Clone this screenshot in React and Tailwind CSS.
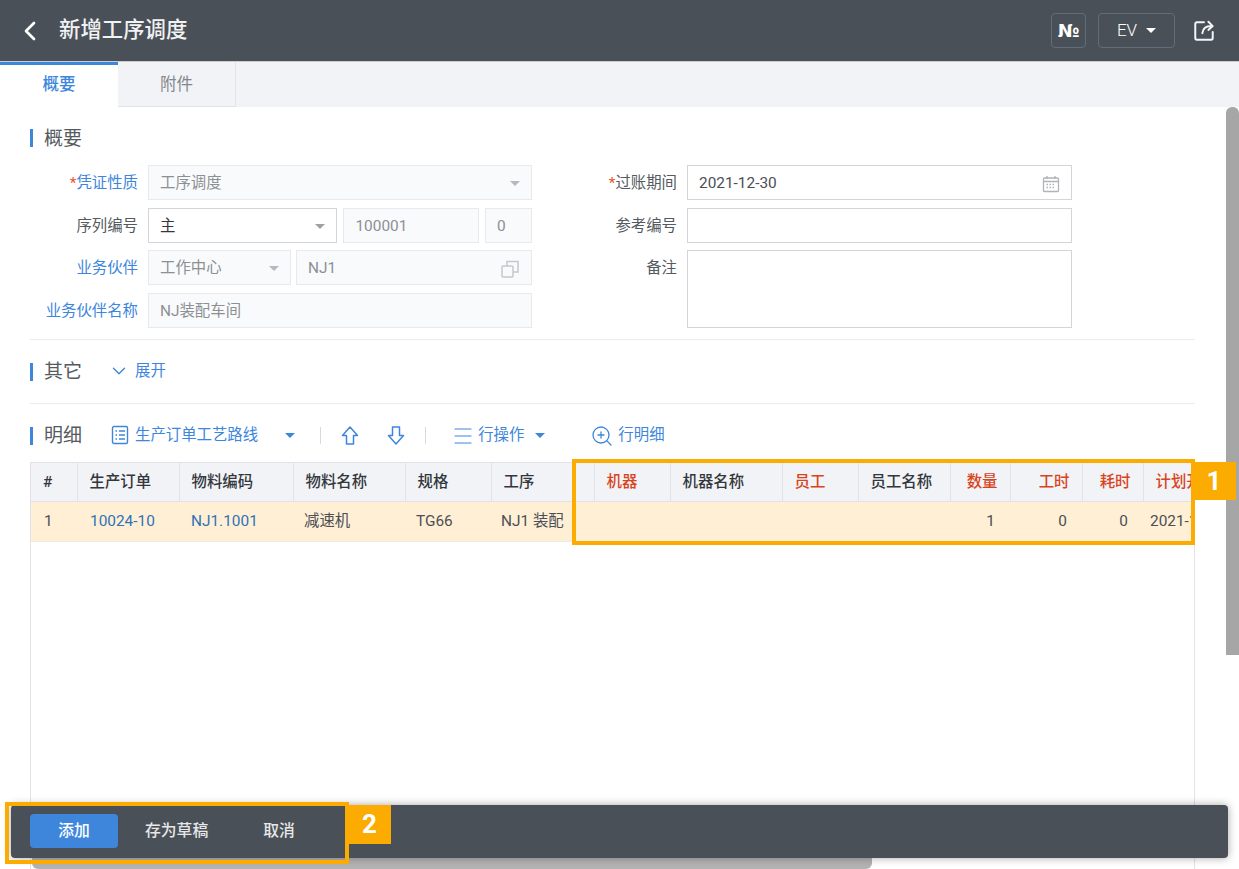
import { ChevronLeft, ChevronDown, Menu, ZoomIn } from 'lucide-react'

const font = '[font-family:Roboto,"Noto_Sans_CJK_SC",sans-serif]'

const columns = [
  { title: '#', value: '1', width: 'w-[46px]', pad: 'pl-[13px]' },
  { title: '生产订单', value: '10024-10', width: 'w-[102px]', pad: 'pl-[13px]', link: true },
  { title: '物料编码', value: 'NJ1.1001', width: 'w-[114px]', pad: 'pl-[12px]', link: true },
  { title: '物料名称', value: '减速机', width: 'w-[112px]', pad: 'pl-[11px]' },
  { title: '规格', value: 'TG66', width: 'w-[86px]', pad: 'pl-[11px]' },
  { title: '工序', value: 'NJ1 装配', width: 'w-[103px]', pad: 'pl-[10px]' },
  { title: '机器', value: '', width: 'w-[76px]', red: true },
  { title: '机器名称', value: '', width: 'w-[112px]' },
  { title: '员工', value: '', width: 'w-[76px]', red: true },
  { title: '员工名称', value: '', width: 'w-[92px]' },
  { title: '数量', value: '1', width: 'w-[60px]', red: true, right: true },
  { title: '工时', value: '0', width: 'w-[72px]', red: true, right: true },
  { title: '耗时', value: '0', width: 'w-[61px]', red: true, right: true },
  { title: '计划开始日期', value: '2021-12-30', width: 'w-[120px]', pad: 'pl-[7px]', red: true },
]

function Caret({ className = 'border-t-[#b5b8bd]' }) {
  return <span className={`block w-0 h-0 border-x-[5px] border-x-transparent border-t-[5px] ${className}`} />
}

function SectionTitle({ children }) {
  return (
    <div className="flex items-center h-[18px] border-l-[3px] border-[#3d86dc] pl-[11px] text-[19px] text-[#555a60] whitespace-nowrap">
      <span className="pt-[2px]">{children}</span>
    </div>
  )
}

function Label({ children, tone = 'text-[#555a60]', required }) {
  return (
    <div className={`w-[108px] shrink-0 pt-[7px] text-right text-[15.4px] whitespace-nowrap ${tone}`}>
      {required && <span className="text-[#f0532b]">*</span>}
      {children}
    </div>
  )
}

function Field({ children, disabled, className = '' }) {
  return (
    <div
      className={`h-[35px] flex items-center justify-between px-[11px] pt-[2px] border text-[15.4px] ${
        disabled ? 'bg-[#f9fafb] border-[#e8e9eb] text-[#8c9095]' : 'bg-white border-[#d3d5d8] text-[#4c5056]'
      } ${className}`}
    >
      {children}
    </div>
  )
}

function FormRow({ label, tone, required, children, className = '' }) {
  return (
    <div className={`flex gap-[10px] ${className}`}>
      <Label tone={tone} required={required}>{label}</Label>
      {children}
    </div>
  )
}

function DetailIcon() {
  return (
    <svg width="18" height="20" viewBox="0 0 18 20" fill="none" stroke="#3d86dc" strokeWidth="1.4">
      <rect x="1.5" y="1.5" width="15" height="17" rx="1.5" />
      <path d="M4.5 6h1.5M8 6h6M4.5 10h1.5M8 10h6M4.5 14h1.5M8 14h6" />
    </svg>
  )
}

function OutlineArrow({ down }) {
  return (
    <svg width="20" height="21" viewBox="0 0 20 21" fill="none" stroke="#3d86dc" strokeWidth="1.5" strokeLinejoin="round" className={down ? 'rotate-180' : ''}>
      <path d="M10 2 2.5 10.5H6.5V19H13.5V10.5H17.5Z" />
    </svg>
  )
}

export default function App() {
  return (
    <div className={`relative h-[869px] w-[1239px] overflow-hidden bg-white flex flex-col ${font}`}>
      {/* top bar */}
      <header className="h-[62px] shrink-0 bg-[#4a5057] border-b border-[#c9ccd0] flex items-center text-white">
        <ChevronLeft size={32} strokeWidth={2} className="ml-[14px]" />
        <h1 className="ml-[13px] text-[21.4px] font-medium text-[#f1f2f3]">新增工序调度</h1>
        <div className="ml-auto flex items-center">
          <div className="w-[35px] h-[35px] flex items-center justify-center border border-[#5f6d7c] rounded text-lg font-bold [font-family:'DejaVu_Sans',sans-serif]">№</div>
          <div className="ml-[12px] w-[77px] h-[35px] flex items-center justify-center gap-[9px] border border-[#5f6d7c] rounded text-[17px] font-light">
            EV
            <Caret className="border-t-white" />
          </div>
          <svg className="ml-[17px] mr-[23px]" width="24" height="24" viewBox="0 0 22 22" fill="none" stroke="#f4f5f6" strokeWidth="1.8" strokeLinecap="round" strokeLinejoin="round">
            <path d="M11 3H4.5A1.5 1.5 0 0 0 3 4.5v13A1.5 1.5 0 0 0 4.5 19h13a1.5 1.5 0 0 0 1.5-1.5V12" />
            <path d="M9.5 13c.5-4 3-6.5 8-6.5M15 2.5l4 4-4 3.5" />
          </svg>
        </div>
      </header>

      {/* tabs */}
      <nav className="h-[45px] shrink-0 bg-[#f1f3f7] flex text-[16.5px]">
        <div className="w-[118px] bg-white border-t-[3px] border-[#3d86dc] pb-[1px] flex items-center justify-center font-medium text-[#3d86dc]">概要</div>
        <div className="w-[118px] border-r border-b border-[#e1e3e8] pt-[3px] flex items-center justify-center text-[#83888e]">附件</div>
      </nav>

      <main className="flex-1 min-h-0 pl-[30px] pr-[44px] flex flex-col">
        <div className="mt-[22px]">
          <SectionTitle>概要</SectionTitle>
        </div>

        {/* form */}
        <div className="mt-[18px] flex">
          <div className="w-[502px] flex flex-col">
            <FormRow label="凭证性质" tone="text-[#3d86dc]" required>
              <Field disabled className="w-[384px]">工序调度<Caret /></Field>
            </FormRow>
            <FormRow label="序列编号" className="mt-[8px]">
              <div className="w-[384px] flex gap-[6px]">
                <Field className="w-[190px] text-[#33373c]">主<Caret className="border-t-[#9da1a6]" /></Field>
                <Field disabled className="w-[136px]">100001</Field>
                <Field disabled className="w-[47px]">0</Field>
              </div>
            </FormRow>
            <FormRow label="业务伙伴" tone="text-[#3d86dc]" className="mt-[7px]">
              <div className="w-[384px] flex gap-[5px]">
                <Field disabled className="w-[143px]">工作中心<Caret /></Field>
                <Field disabled className="w-[236px]">
                  NJ1
                  <svg width="20" height="20" viewBox="0 0 20 20" fill="none" stroke="#c6c8cb" strokeWidth="1.5">
                    <rect x="2" y="7" width="11" height="11" rx="1" />
                    <path d="M7 7V2.5h11V13h-5" />
                  </svg>
                </Field>
              </div>
            </FormRow>
            <FormRow label="业务伙伴名称" tone="text-[#3d86dc]" className="mt-[8px]">
              <Field disabled className="w-[384px]">NJ装配车间</Field>
            </FormRow>
          </div>

          <div className="ml-[37px] flex flex-col">
            <FormRow label="过账期间" required>
              <Field className="w-[385px]">
                2021-12-30
                <svg width="18" height="18" viewBox="0 0 18 18" fill="none" stroke="#b0b3b7" strokeWidth="1.3">
                  <rect x="1.5" y="3" width="15" height="13.5" rx="1" />
                  <path d="M1.5 6.5h15M5 1v3M13 1v3" />
                  <path d="M4.5 9.5h9M4.5 12.5h9" strokeDasharray="1.5 1.5" />
                </svg>
              </Field>
            </FormRow>
            <FormRow label="参考编号" className="mt-[8px]">
              <Field className="w-[385px]" />
            </FormRow>
            <FormRow label="备注" className="mt-[7px]">
              <div className="w-[385px] h-[78px] border border-[#d3d5d8]" />
            </FormRow>
          </div>
        </div>

        <div className="mt-[11px] border-t border-[#ebecee]" />
        <div className="h-[64px] flex items-center border-b border-[#ebecee]">
          <SectionTitle>其它</SectionTitle>
          <div className="ml-[26px] flex items-center gap-[5px] text-[15.4px] text-[#3d86dc]">
            <ChevronDown size={22} strokeWidth={1.5} />
            展开
          </div>
        </div>

        {/* toolbar */}
        <div className="h-[58px] shrink-0 pt-[5px] flex items-center text-[15.4px] text-[#3d86dc] whitespace-nowrap">
          <SectionTitle>明细</SectionTitle>
          <div className="ml-[29px] flex items-center gap-[6px]">
            <DetailIcon />
            生产订单工艺路线
          </div>
          <div className="ml-[27px]"><Caret className="border-t-[#3d86dc]" /></div>
          <div className="ml-[25px] h-[17px] border-l border-[#d8dadd]" />
          <div className="ml-[19px]"><OutlineArrow /></div>
          <div className="ml-[26px]"><OutlineArrow down /></div>
          <div className="ml-[19px] h-[17px] border-l border-[#d8dadd]" />
          <div className="ml-[25px] flex items-center gap-[3px]">
            <Menu size={24} strokeWidth={1.2} />
            行操作
            <span className="ml-[8px]"><Caret className="border-t-[#3d86dc]" /></span>
          </div>
          <div className="ml-[45px] flex items-center gap-[4px]">
            <ZoomIn size={24} strokeWidth={1.3} />
            行明细
          </div>
        </div>

        {/* detail table */}
        <div className="flex-1 min-h-0 overflow-hidden border-x border-[#e1e3e8]">
          <table className="table-fixed w-[1232px] border-collapse text-[15.4px]">
            <thead>
              <tr className="h-[39px] bg-[#f1f3f7] border-y border-[#e1e3e8]">
                {columns.map(col => (
                  <th
                    key={col.title}
                    className={`${col.width} pl-[12px] pr-[12px] pt-[1px] font-medium whitespace-nowrap overflow-hidden border-r border-[#e1e3e8] ${
                      col.right ? 'text-right' : 'text-left'
                    } ${col.red ? 'text-[#d9441c]' : 'text-[#33373c]'}`}
                  >
                    {col.title}
                  </th>
                ))}
              </tr>
            </thead>
            <tbody>
              <tr className="h-[40px] bg-[#ffefd5] border-y border-[#ecebe6]">
                {columns.map(col => (
                  <td
                    key={col.title}
                    className={`whitespace-nowrap overflow-hidden pt-[1px] ${col.pad || ''} ${col.right ? 'pr-[15px] text-right' : 'text-left'} ${
                      col.link ? 'text-[#2f73b8]' : 'text-[#4c5056]'
                    }`}
                  >
                    {col.value}
                  </td>
                ))}
              </tr>
            </tbody>
          </table>
        </div>
      </main>

      {/* scrollbars */}
      <div className="absolute right-0 top-[107px] w-[13px] h-[548px] rounded-t-md bg-[#a6a6a6]" />
      <div className="absolute left-[32px] top-[857px] w-[840px] h-[12px] rounded-b-md bg-[#b3b3b3]" />

      {/* action bar */}
      <div className="absolute left-[11px] top-[805px] w-[1217px] h-[53px] rounded bg-[#4a5057] shadow-[0_0_8px_rgba(0,0,0,0.35)] flex items-center text-[15.8px] font-medium text-[#e6e7e8] pb-[1px]">
        <button className="ml-[19px] w-[88px] h-[34px] rounded bg-[#3d86dc] text-white">添加</button>
        <button className="ml-[27px]">存为草稿</button>
        <button className="ml-[55px]">取消</button>
      </div>

      {/* callouts */}
      <div className="absolute left-[572px] top-[459px] w-[623px] h-[86px] border-4 border-[#fcab00]" />
      <div className="absolute left-[1192px] top-[462px] w-[44px] h-[38px] bg-[#fcab00] flex items-center justify-center text-[26px] font-bold text-white">1</div>
      <div className="absolute left-[5px] top-[802px] w-[344px] h-[62px] border-4 border-[#fcab00]" />
      <div className="absolute left-[348px] top-[805px] w-[43px] h-[39px] bg-[#fcab00] flex items-center justify-center text-[26px] font-bold text-white">2</div>
    </div>
  )
}
